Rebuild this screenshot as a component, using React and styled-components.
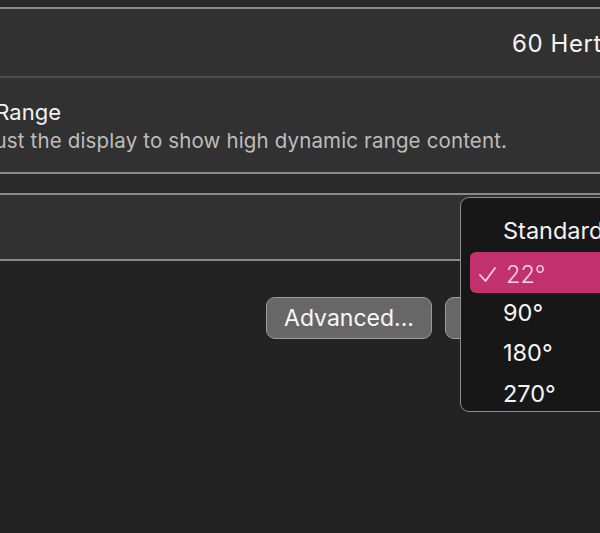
import React from "react";
import styled, { createGlobalStyle } from "styled-components";

const Global = createGlobalStyle`
  html, body { margin: 0; padding: 0; background: #232323; }
  body { font-family: Inter, "Noto Sans", "Liberation Sans", sans-serif; -webkit-font-smoothing: antialiased; }
`;

const Root = styled.div`
  position: relative;
  width: 600px;
  height: 533px;
  overflow: hidden;
  background: #232323;
`;

const Canvas = styled.div`
  margin-left: -193px;
  width: 900px;
  display: flex;
  flex-direction: column;
`;

const Strip = styled.div`
  height: ${(p) => p.$h}px;
  background: #292929;
`;

const Group = styled.section`
  background: #313131;
  border-top: 2px solid #8a8a8a;
  border-bottom: 2px solid #8a8a8a;
  display: flex;
  flex-direction: column;
`;

const Row = styled.div`
  height: ${(p) => p.$h}px;
  display: grid;
  grid-template-columns: 1fr 175px;
  align-items: center;
  padding: 0 20px 0 22px;
  & + & { border-top: 2px solid #4c4c4c; }
`;

const Label = styled.div`
  font-size: 22px;
  color: #f2f2f2;
`;

const Value = styled.div`
  font-size: 24px;
  letter-spacing: 0.6px;
  color: #f4f4f4;
  white-space: nowrap;
  padding-top: 2px;
`;

const TextBlock = styled.div`
  display: flex;
  flex-direction: column;
  gap: 3px;
  padding-top: 2px;
`;

const Title = styled.div`
  font-size: 22px;
  color: #f2f2f2;
  margin-left: ${(p) => p.$shift}px;
`;

const Desc = styled.div`
  font-size: 20.5px;
  letter-spacing: 0.15px;
  color: #bdbdbd;
  margin-left: ${(p) => p.$shift}px;
`;

const Buttons = styled.div`
  display: flex;
  gap: 13px;
  padding: 36px 0 0 459px;
`;

const Button = styled.button`
  height: 42px;
  min-width: ${(p) => p.$w}px;
  padding: 0 14px;
  border-radius: 9px;
  border: 1.5px solid #9c9c9c;
  background: #676767;
  color: #f7f7f7;
  font-family: inherit;
  font-size: 23px;
`;

const Menu = styled.div`
  position: absolute;
  left: 460px;
  top: 197px;
  width: 220px;
  height: 215px;
  box-sizing: border-box;
  background: #171717;
  border: 1.5px solid #8e8e8e;
  border-radius: 9px;
  padding: 10px 0 0 9px;
  display: flex;
  flex-direction: column;
`;

const Item = styled.div`
  height: ${(p) => p.$h}px;
  flex: none;
  display: flex;
  align-items: center;
  gap: 9px;
  padding-left: ${(p) => (p.$checked ? 8 : 33)}px;
  padding-top: ${(p) => (p.$checked ? 4 : 0)}px;
  box-sizing: border-box;
  border-radius: 6px;
  background: ${(p) => (p.$checked ? "#c3306e" : "transparent")};
  color: ${(p) => (p.$checked ? "#f6d3e2" : "#f4f4f4")};
  font-size: 23.5px;
  font-weight: ${(p) => (p.$checked ? 300 : 400)};
  svg { flex: none; }
`;

const Check = () => (
  <svg width="19" height="17" viewBox="0 0 19 17">
    <polyline points="2,9 7.5,15 17,2" fill="none" stroke="#f6d3e2" strokeWidth="1.8" strokeLinecap="round" strokeLinejoin="round" />
  </svg>
);

export default function App() {
  return (
    <Root>
      <Global />
      <Canvas>
        <Strip $h={7} />
        <Group>
          <Row $h={67}>
            <Label>Refresh Rate</Label>
            <Value>60 Hertz</Value>
          </Row>
          <Row $h={94}>
            <TextBlock>
              <Title $shift={15}>High Dynamic Range</Title>
              <Desc $shift={-3}>Automatically adjust the display to show high dynamic range content.</Desc>
            </TextBlock>
          </Row>
        </Group>
        <Strip $h={19} />
        <Group>
          <Row $h={64}>
            <Label>Rotation</Label>
          </Row>
        </Group>
        <Buttons>
          <Button $w={166}>Advanced...</Button>
          <Button $w={150}>Night Shift...</Button>
        </Buttons>
      </Canvas>
      <Menu>
        <Item $h={44}>Standard</Item>
        <Item $h={41} $checked><Check />22°</Item>
        <Item $h={38}>90°</Item>
        <Item $h={42}>180°</Item>
        <Item $h={40}>270°</Item>
      </Menu>
    </Root>
  );
}
